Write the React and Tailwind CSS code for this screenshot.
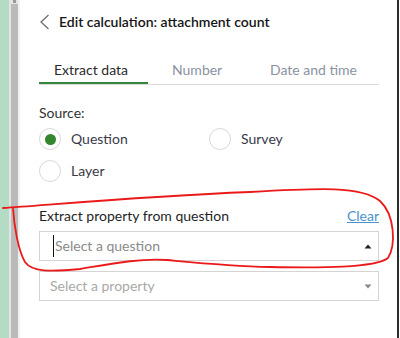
import React from "react";

function Radio({ checked, label }) {
  return (
    <div className="flex items-center gap-[10px] h-[22px]">
      <div className="w-[22px] h-[22px] rounded-full border-[1.5px] border-[#d9d9d9] flex items-center justify-center bg-white">
        {checked && <div className="w-[11px] h-[11px] rounded-full bg-[#33862f]" />}
      </div>
      <span className="text-[14px] text-[#3a3a48] leading-none">{label}</span>
    </div>
  );
}

function Caret({ up, color }) {
  return (
    <svg width="8" height="5" viewBox="0 0 8 5" className="shrink-0">
      {up ? (
        <path d="M0.5 4.5 L4 0.5 L7.5 4.5 Z" fill={color} />
      ) : (
        <path d="M0.5 0.5 L4 4.5 L7.5 0.5 Z" fill={color} />
      )}
    </svg>
  );
}

export default function App() {
  return (
    <div
      className="w-[400px] h-[338px] flex bg-white overflow-hidden relative"
      style={{ fontFamily: "Lato, 'Noto Sans', sans-serif" }}
    >
      <div className="w-[9px] h-full bg-[#b4dcc4]" />
      <div className="w-[2px] h-full bg-[#e4e4e4]" />
      <div className="w-[7px] h-full bg-[#bababa] flex flex-col items-center">
        <div className="w-full h-[4px] bg-[#e4e4e4] flex justify-center">
          <div className="w-[3px] h-[3px] bg-[#9a9a9a]" />
        </div>
      </div>
      <div className="w-[2px] h-full bg-[#f1f1f1]" />
      <div className="flex-1 h-full pl-[19px] pr-[18px] flex flex-col">
        <div className="flex items-center h-[16px] mt-[14px]">
          <svg width="11" height="16" viewBox="0 0 11 16" className="shrink-0">
            <path d="M9.5 1 L2 8 L9.5 15" fill="none" stroke="#707070" strokeWidth="1.3" />
          </svg>
          <span className="ml-[9px] text-[14px] font-semibold text-[#151515] leading-none whitespace-nowrap">
            Edit calculation: attachment count
          </span>
        </div>
        <div className="mt-[32px] flex border-b border-[#dcdcdc] h-[23px]">
          <div className="w-[109px] border-b-2 border-[#35863a] pl-[15px] text-[14px] text-[#2b2b2b] leading-none pt-[1px]">
            Extract data
          </div>
          <div className="pl-[24px] w-[122px] text-[14px] text-[#8a929f] leading-none pt-[1px]">Number</div>
          <div className="text-[14px] text-[#8a929f] leading-none pt-[1px]">Date and time</div>
        </div>
        <div className="mt-[21px] text-[14px] text-[#323232] leading-none">Source:</div>
        <div className="mt-[8px] grid grid-cols-[170px_1fr] gap-y-[10px]">
          <Radio checked label="Question" />
          <Radio label="Survey" />
          <Radio label="Layer" />
        </div>
        <div className="mt-[27px] flex items-center justify-between h-[14px]">
          <span className="text-[14px] text-[#1f1f1f] leading-none">Extract property from question</span>
          <span className="text-[14px] text-[#4a92cc] underline leading-none">Clear</span>
        </div>
        <div className="mt-[8px] h-[30px] border border-[#d4d4d4] flex items-center pl-[13px] pr-[6px]">
          <div className="w-[1px] h-[22px] bg-[#111]" />
          <span className="ml-[1px] flex-1 text-[14px] text-[#8a8a8a] leading-none">Select a question</span>
          <Caret up color="#222" />
        </div>
        <div className="mt-[10px] h-[30px] border border-[#d4d4d4] flex items-center pl-[10px] pr-[6px]">
          <span className="flex-1 text-[14px] text-[#a9a9a9] leading-none">Select a property</span>
          <Caret color="#8a8a8a" />
        </div>
      </div>
      <div className="w-[2px] h-full bg-[#2b2b2b]" />
      <div className="w-[1px] h-full bg-white" />
      <svg
        className="absolute left-0 top-0 pointer-events-none"
        width="400"
        height="338"
        viewBox="0 0 400 338"
      >
        <path
          d="M3 208 C 60 204, 150 196, 250 192 C 320 188, 362 186, 380 201 C 395 215, 396 245, 388 258 C 375 268, 320 268, 270 267 C 230 266, 200 263, 167 260 C 140 258, 110 264, 80 269 C 50 272, 32 272, 25 262 C 18 250, 14 225, 13 208"
          fill="none"
          stroke="#ea1a1a"
          strokeWidth="1.8"
          strokeLinecap="round"
        />
      </svg>
    </div>
  );
}
